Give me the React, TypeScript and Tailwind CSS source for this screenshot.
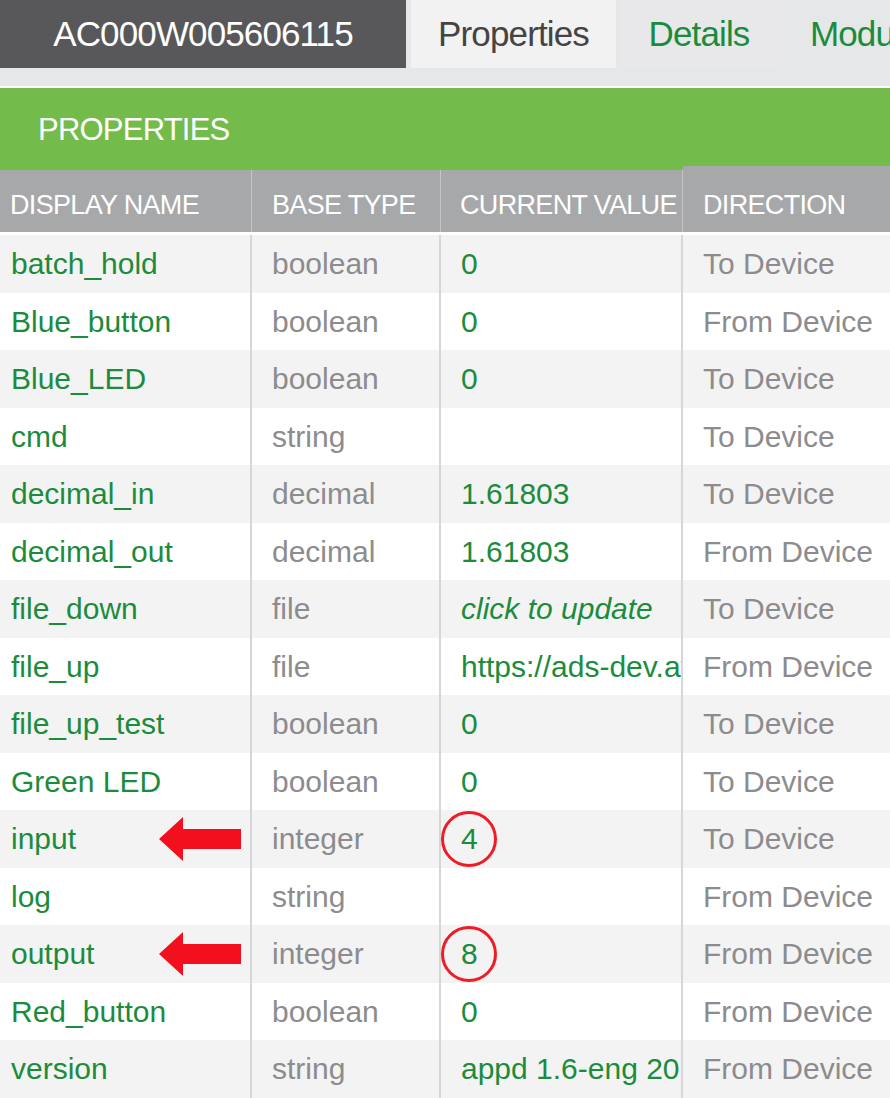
import React from "react";

type Row = { name: string; type: string; value: string; dir: string; italic?: boolean; mark?: boolean };

const rows: Row[] = [
  { name: "batch_hold", type: "boolean", value: "0", dir: "To Device" },
  { name: "Blue_button", type: "boolean", value: "0", dir: "From Device" },
  { name: "Blue_LED", type: "boolean", value: "0", dir: "To Device" },
  { name: "cmd", type: "string", value: "", dir: "To Device" },
  { name: "decimal_in", type: "decimal", value: "1.61803", dir: "To Device" },
  { name: "decimal_out", type: "decimal", value: "1.61803", dir: "From Device" },
  { name: "file_down", type: "file", value: "click to update", dir: "To Device", italic: true },
  { name: "file_up", type: "file", value: "https://ads-dev.aylanetworks.com", dir: "From Device" },
  { name: "file_up_test", type: "boolean", value: "0", dir: "To Device" },
  { name: "Green LED", type: "boolean", value: "0", dir: "To Device" },
  { name: "input", type: "integer", value: "4", dir: "To Device", mark: true },
  { name: "log", type: "string", value: "", dir: "From Device" },
  { name: "output", type: "integer", value: "8", dir: "From Device", mark: true },
  { name: "Red_button", type: "boolean", value: "0", dir: "From Device" },
  { name: "version", type: "string", value: "appd 1.6-eng 2017-03-01", dir: "From Device" },
];

const Arrow = () => (
  <svg width="82" height="44" viewBox="0 0 82 44" className="absolute right-[9px] top-1/2 -translate-y-1/2">
    <polygon points="0,22 24,0 24,12 82,12 82,32 24,32 24,44" fill="#f3101e" />
  </svg>
);

export default function App() {
  return (
    <div className="w-[890px] h-[1098px] overflow-hidden bg-white" style={{ fontFamily: '"Liberation Sans", Arial, sans-serif' }}>
      {/* tabs */}
      <div className="flex h-[68px] bg-[#e6e7e9] overflow-hidden">
        <div className="shrink-0 w-[406px] bg-[#58585a] flex items-center justify-center text-white text-[35px] tracking-tight">
          AC000W005606115
        </div>
        <div className="shrink-0 ml-[5px] w-[205px] bg-[#f2f2f2] flex items-center justify-center text-[#444] text-[35px] tracking-tight">
          Properties
        </div>
        <div className="shrink-0 ml-[4px] w-[158px] bg-[#e8e8ea] flex items-center justify-center text-[#1b8c3c] text-[35px] tracking-tight">
          Details
        </div>
        <div className="shrink-0 pl-[32px] flex items-center text-[#1b8c3c] text-[35px] tracking-tight whitespace-nowrap">
          Modules
        </div>
      </div>
      <div className="h-[20px] bg-[#e6e7e9] border-b-2 border-white" />
      <div className="h-[82px] bg-[#73bc4b] flex items-center pl-[38px] pt-[2px] text-white text-[31px] tracking-tight">
        PROPERTIES
      </div>
      {/* header */}
      <div className="flex h-[62px] bg-[#a7a8aa] text-white text-[27px] tracking-tight">
        <div className="w-[252px] pl-[10px] pt-[8px] flex items-center border-r border-[#c4c4c6] whitespace-nowrap">DISPLAY NAME</div>
        <div className="w-[189px] pl-[20px] pt-[8px] flex items-center border-r border-[#c4c4c6] whitespace-nowrap">BASE TYPE</div>
        <div className="w-[242px] pl-[19px] pt-[8px] flex items-center border-r border-[#c4c4c6] whitespace-nowrap overflow-hidden">CURRENT VALUE</div>
        <div className="flex-1 -mt-[4px] bg-[#a7a8aa] pl-[20px] pt-[12px] flex items-center whitespace-nowrap">DIRECTION</div>
      </div>
      <div className="h-[3px] bg-white" />
      {/* rows */}
      {rows.map((r, i) => (
        <div key={r.name} className={`flex h-[57.5px] text-[30px] ${i % 2 === 0 ? "bg-[#f3f3f3]" : "bg-white"}`}>
          <div className="relative w-[252px] pl-[11px] flex items-center text-[#1b8c3c] border-r-2 border-[#d6d6d6] whitespace-nowrap">
            {r.name}
            {r.mark && <Arrow />}
          </div>
          <div className="w-[189px] pl-[20px] flex items-center text-[#8c8c8e] border-r-2 border-[#d6d6d6]">{r.type}</div>
          <div className="relative w-[242px] pl-[20px] flex items-center text-[#1b8c3c] border-r-2 border-[#d6d6d6] whitespace-nowrap overflow-hidden">
            {r.mark && (
              <span className="absolute left-[0px] top-1/2 -translate-y-1/2 w-[56px] h-[56px] rounded-full border-[3px] border-[#ee1c24]" />
            )}
            <span className={r.italic ? "italic" : ""}>{r.value}</span>
          </div>
          <div className="flex-1 pl-[20px] flex items-center text-[#8c8c8e] whitespace-nowrap">{r.dir}</div>
        </div>
      ))}
    </div>
  );
}
